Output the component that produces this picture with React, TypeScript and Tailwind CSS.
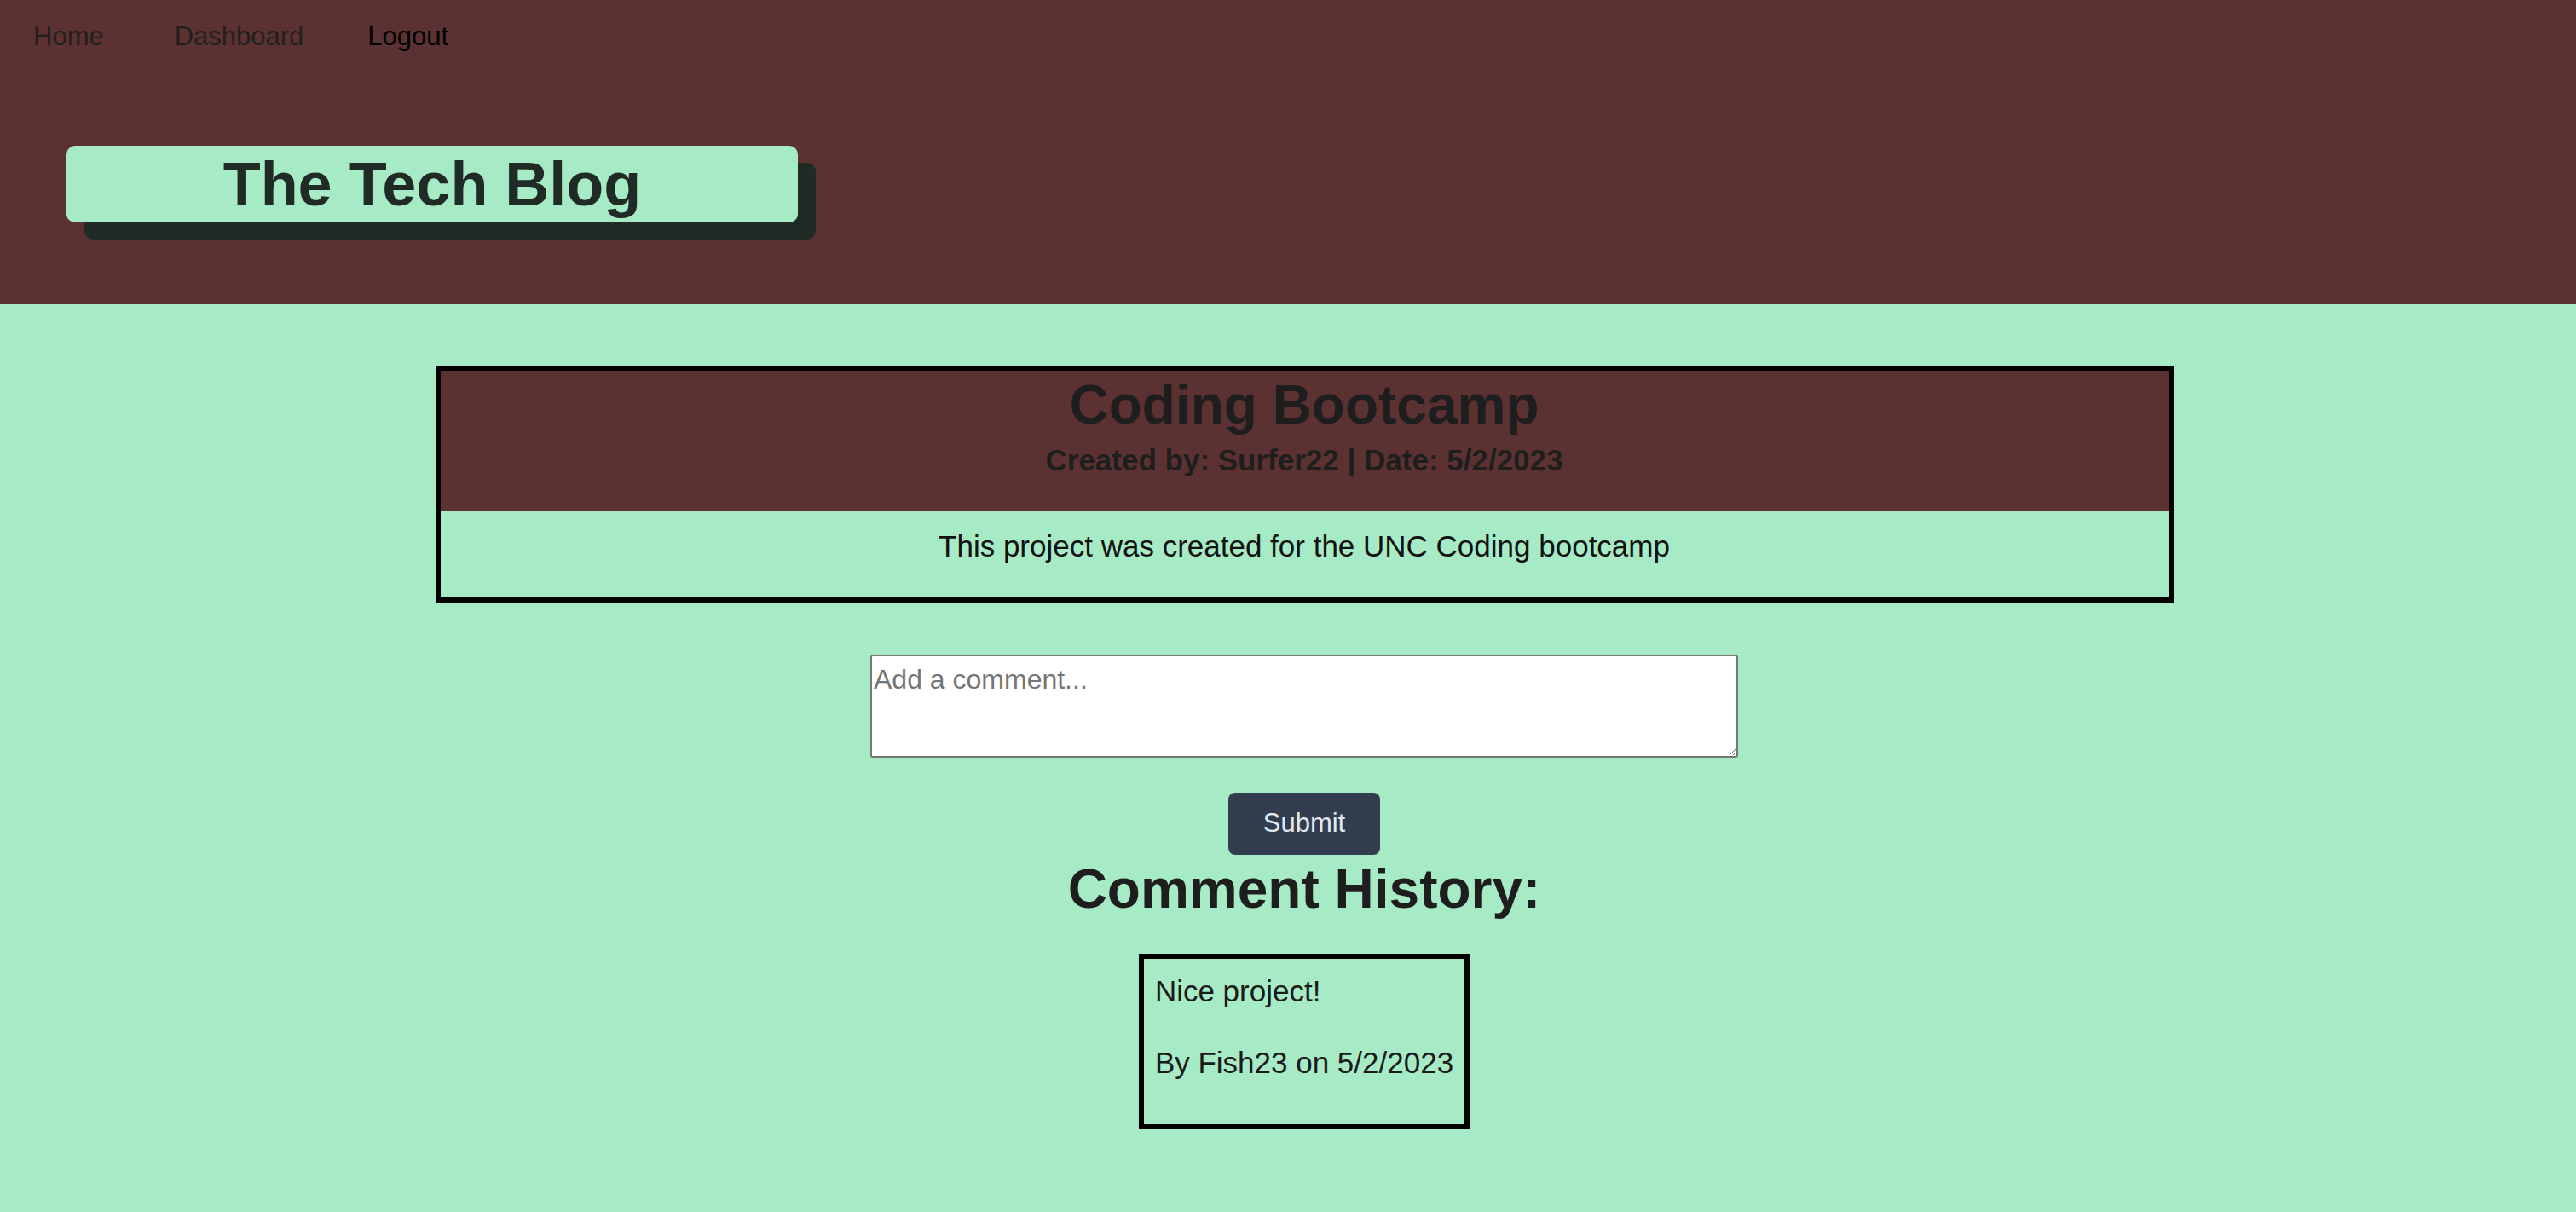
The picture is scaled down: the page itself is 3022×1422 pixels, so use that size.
import React from "react";

export default function App() {
  return (
    <div className="min-h-screen bg-[#a6ebc5] font-['Liberation_Sans',Arial,sans-serif]">
      <header className="h-[357px] bg-[#5c3131]">
        <nav className="flex pl-[39px] pt-[25px] text-[31px] leading-[36px]">
          <a href="#" className="text-[#202020]">Home</a>
          <a href="#" className="ml-[83px] text-[#202020]">Dashboard</a>
          <a href="#" className="ml-[75px] text-black">Logout</a>
        </nav>
        <div className="ml-[78px] mt-[110px] flex h-[90px] w-[858px] items-center justify-center rounded-[10px] bg-[#a6ebc5] shadow-[21px_20px_0_0_#1f2b24]">
          <h1 className="text-[72px] font-bold leading-[90px] text-[#1f2b24]">The Tech Blog</h1>
        </div>
      </header>
      <main className="flex flex-col items-center pl-[38px]">
        <section className="mt-[72px] w-[2039px] border-[6px] border-black">
          <div className="bg-[#5c3131] pb-[40px] pt-[3px] text-center text-[#1e1e1e]">
            <h2 className="text-[64px] font-bold leading-[74px]">Coding Bootcamp</h2>
            <h3 className="mt-[8px] text-[35px] font-bold leading-[40px]">Created by: Surfer22 | Date: 5/2/2023</h3>
          </div>
          <div className="pb-[40px] pt-[21px] text-center text-[35px] leading-[40px] text-[#111]">
            This project was created for the UNC Coding bootcamp
          </div>
        </section>
        <textarea
          placeholder="Add a comment..."
          className="mt-[61px] h-[121px] w-[1018px] rounded-[3px] border-2 border-[#767676] bg-white px-[2px] pt-[3px] text-[32px] text-black placeholder:text-[#757575]"
        />
        <button className="mt-[41px] h-[73px] rounded-[8px] bg-[#323e4f] px-[41px] text-[31px] text-[#e2e8f0]">
          Submit
        </button>
        <h2 className="mt-[3px] text-[64px] font-bold leading-[74px] text-[#1e1e1e]">Comment History:</h2>
        <div className="mt-[39px] border-[6px] border-black px-[13px] pb-[52px] pt-[18px] text-[35px] leading-[40px] text-[#1a1a1a]">
          <p>Nice project!</p>
          <p className="mt-[44px]">By Fish23 on 5/2/2023</p>
        </div>
      </main>
    </div>
  );
}
